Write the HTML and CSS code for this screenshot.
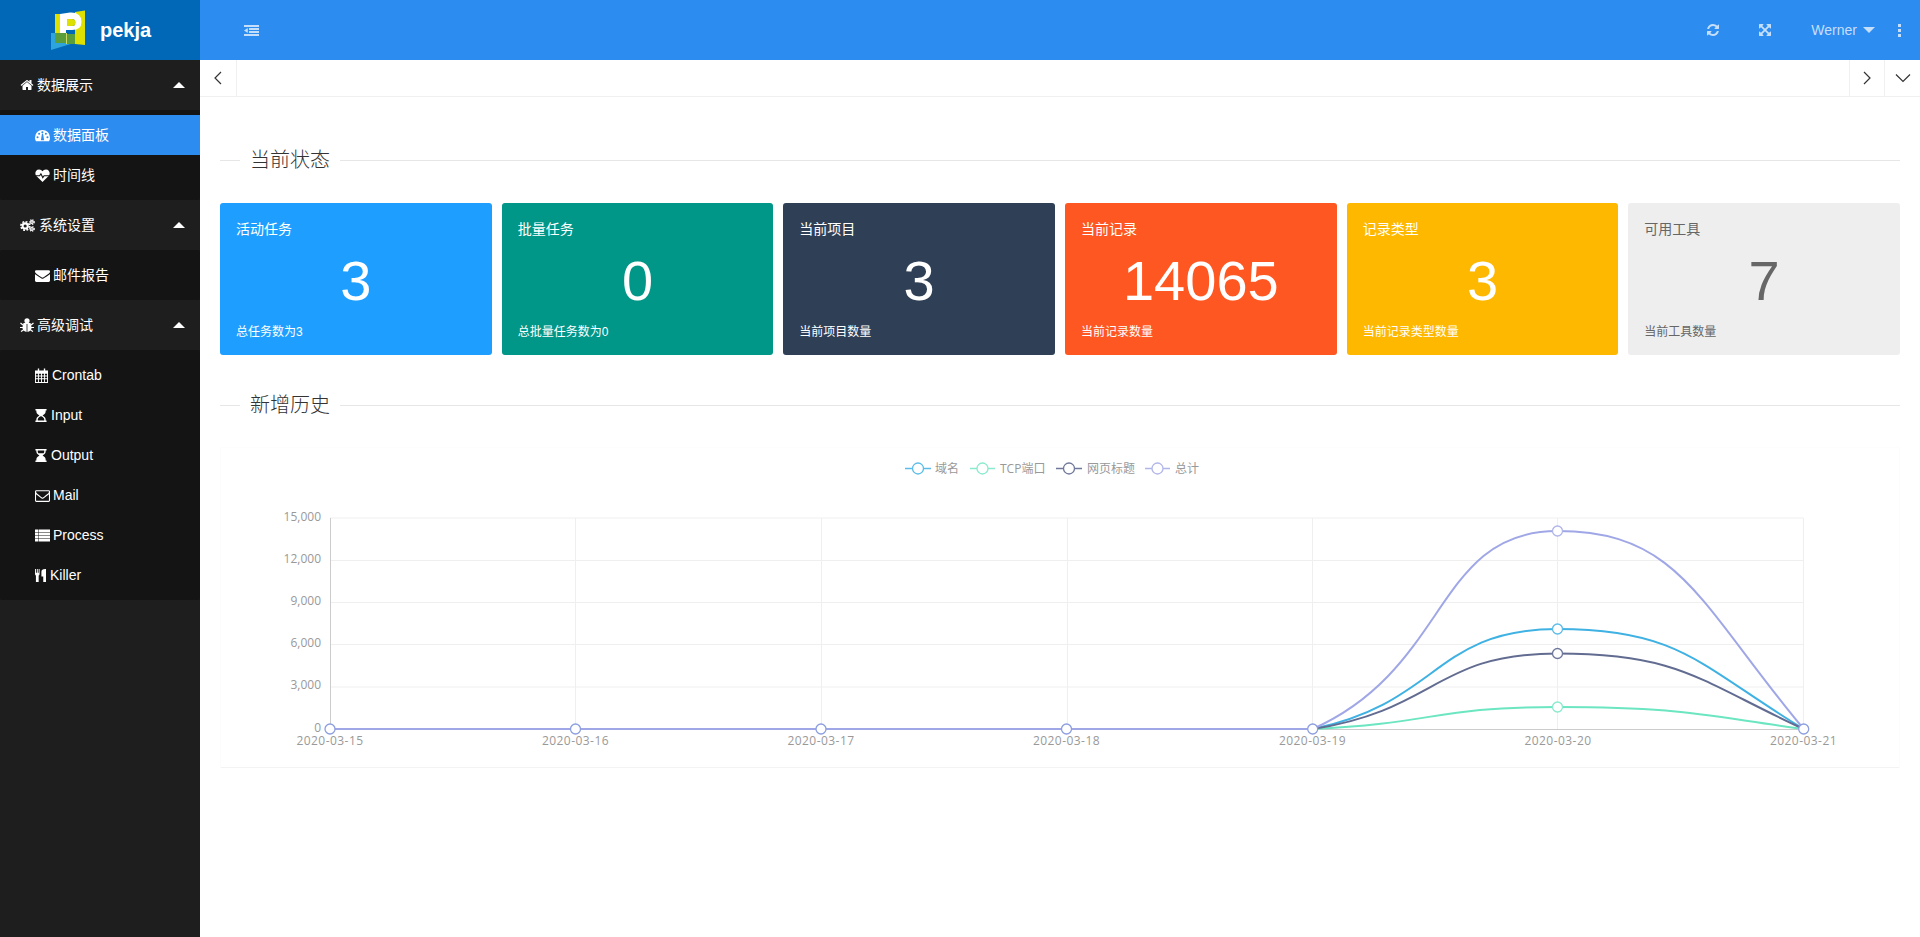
FILE: index.html
```html
<!DOCTYPE html>
<html lang="zh-CN">
<head>
<meta charset="utf-8">
<title>pekja</title>
<link rel="stylesheet" href="styles.css">
</head>
<body>
<aside class="sidebar">
  <div class="logo">
    <svg class="logo-mark" viewBox="0 0 36 40" aria-hidden="true">
      <path class="lg-yellow" d="M5 4h6v19H5z"/>
      <path class="lg-yellow" d="M25 2L35 0.500V35L25 34z"/>
      <path class="lg-blue" d="M1 23L5 23V33H24L1 40z"/>
      <path class="lg-green" d="M5 23H16V33H5z"/>
      <path class="lg-green" d="M17 24H25V34H17z"/>
      <path class="lg-pale" d="M16 23h1v11h-1z"/>
      <path class="lg-white" fill-rule="evenodd" d="M10 4L20 2.500Q31.500 2 31.500 12Q31.500 20 22 20H16V23H10zM17 9V16H22Q25.500 16 25.500 12.500Q25.500 9 22 9z"/>
      <path class="lg-yellow" d="M17 9H22Q25.500 9 25.500 12.500Q25.500 16 22 16H17z"/>
    </svg>
    <span class="logo-text">pekja</span>
  </div>
  <nav class="nav">
    <div class="nav-head">
      <span class="nav-label">
        <svg class="ic ic-home" viewBox="0 0 1792 1792"><path d="M1472 992v480q0 26-19 45t-45 19h-384v-384h-256v384h-384q-26 0-45-19t-19-45v-480q0-1 .5-3t.5-3l575-474 575 474q1 2 1 6zm223-69l-62 74q-8 9-21 11h-3q-13 0-21-7l-692-577-692 577q-12 8-24 7-13-2-21-11l-62-74q-8-10-7-23.500t11-21.500l719-599q32-26 76-26t76 26l244 204v-195q0-14 9-23t23-9h192q14 0 23 9t9 23v408l219 182q10 8 11 21.500t-7 23.500z"/></svg>
        数据展示
      </span>
      <i class="caret-up"></i>
    </div>
    <ul class="nav-sub">
      <li class="nav-item is-active">
        <svg class="ic ic-wide" viewBox="0 0 16 16"><path fill-rule="evenodd" d="M8 2A8 8 0 0 0 0 10q0 2 1 4h14q1-2 1-4a8 8 0 0 0-8-8zM2.700 11a1.100 1.100 0 1 1 0-2.200 1.100 1.100 0 0 1 0 2.200zm1.700-3.700a1.100 1.100 0 1 1 0-2.200 1.100 1.100 0 0 1 0 2.200zM7.900 5.700a1.100 1.100 0 1 1 0-2.200 1.100 1.100 0 0 1 0 2.200zm3.700 1.600a1.100 1.100 0 1 1 0-2.200 1.100 1.100 0 0 1 0 2.200zM13.300 11a1.100 1.100 0 1 1 0-2.200 1.100 1.100 0 0 1 0 2.200zM9.700 13h-3.400l1.100-7h1.200z"/></svg>
        数据面板
      </li>
      <li class="nav-item">
        <svg class="ic ic-wide" viewBox="0 0 16 16"><path d="M8 15L1.500 8.500C-.8 6 .5 1.500 4.300 1.500 6 1.500 7.300 2.500 8 3.500c.7-1 2-2 3.700-2 3.800 0 5.100 4.500 2.800 7z"/><path class="ic-cut" d="M.5 8.200h4.500l1.300-2 2 4 1.400-2h6"/></svg>
        时间线
      </li>
    </ul>
    <div class="nav-head">
      <span class="nav-label">
        <svg class="ic ic-cogs" viewBox="0 0 16 14"><circle class="gear-teeth" cx="5.500" cy="7.500" r="4.600"/><circle class="gear-body" cx="5.500" cy="7.500" r="2.800"/><circle class="gear-teeth gear-sm" cx="12.800" cy="3.300" r="2.500"/><circle class="gear-body gear-body-sm" cx="12.800" cy="3.300" r="1.400"/><circle class="gear-teeth gear-sm" cx="12.800" cy="10.700" r="2.500"/><circle class="gear-body gear-body-sm" cx="12.800" cy="10.700" r="1.400"/></svg>
        系统设置
      </span>
      <i class="caret-up"></i>
    </div>
    <ul class="nav-sub">
      <li class="nav-item">
        <svg class="ic ic-wide" viewBox="0 0 1792 1792"><path d="M1792 710v794q0 66-47 113t-113 47h-1472q-66 0-113-47t-47-113v-794q44 49 101 87 362 246 497 345 57 42 92.500 65.500t94.500 48 110 24.500h2q51 0 110-24.500t94.500-48 92.500-65.500q170-123 498-345 57-39 100-87zm0-294q0 79-49 151t-122 123q-376 261-468 325-10 7-42.500 30.500t-54 38-52 32.500-57.500 27-50 9h-2q-23 0-50-9t-57.500-27-52-32.500-54-38-42.500-30.500q-91-64-262-182.500t-205-142.500q-62-42-117-115.500t-55-136.500q0-78 41.500-130t118.500-52h1472q65 0 112.500 47t47.500 113z"/></svg>
        邮件报告
      </li>
    </ul>
    <div class="nav-head">
      <span class="nav-label">
        <svg class="ic ic-home ic-bug" viewBox="0 0 14 14"><circle cx="7" cy="2.800" r="2.600"/><path d="M3.500 5h7q1 3 1 5 0 3-4.500 4-4.500-1-4.500-4 0-2 1-5z"/><path class="bug-legs" d="M3 7L.5 5M3 9.500H0M3.500 12L1 13.500M11 7l2.500-2M11 9.500h3M10.500 12l2.500 1.500"/><path class="ic-cut thin" d="M7 6v8"/></svg>
        高级调试
      </span>
      <i class="caret-up"></i>
    </div>
    <ul class="nav-sub">
      <li class="nav-item">
        <svg class="ic ic-cal" viewBox="0 0 14 16"><path fill-rule="evenodd" d="M0 2.500h3V.5h1.500v2h5V.5H11v2h3V16H0zM1 6v2h2.200V6zm3.200 0v2h2.300V6zm3.300 0v2h2.300V6zm3.300 0v2H13V6zM1 9v2h2.200V9zm3.200 0v2h2.300V9zm3.300 0v2h2.300V9zm3.300 0v2H13V9zM1 12v3h2.200v-3zm3.200 0v3h2.300v-3zm3.300 0v3h2.300v-3zm3.300 0v3H13v-3z"/></svg>
        Crontab
      </li>
      <li class="nav-item">
        <svg class="ic ic-glass" viewBox="0 0 12 14"><path fill-rule="evenodd" d="M0 0h12v1.500h-1V3c0 2-2 3.200-3.300 4C9 7.800 11 9 11 11v1.500h1V14H0v-1.500h1V11c0-2 2-3.200 3.300-4C3 6.200 1 5 1 3V1.500H0zM6 7.700C5 8 2.500 9.200 2.500 11v1.500h7V11C9.500 9.200 7 8 6 7.700z"/></svg>
        Input
      </li>
      <li class="nav-item">
        <svg class="ic ic-glass" viewBox="0 0 12 14"><path fill-rule="evenodd" d="M0 0h12v1.500h-1V3c0 2-2 3.200-3.300 4C9 7.800 11 9 11 11v1.500h1V14H0v-1.500h1V11c0-2 2-3.200 3.300-4C3 6.200 1 5 1 3V1.500H0zM2.500 1.500V3c0 .6.300 1.200.7 1.700h5.600c.4-.5.700-1.100.7-1.700V1.500z"/></svg>
        Output
      </li>
      <li class="nav-item">
        <svg class="ic ic-wide" viewBox="0 0 1792 1792"><path d="M1664 1504v-768q-32 36-69 66-268 206-426 338-51 43-83 67t-86.500 48.500-102.500 24.500h-2q-48 0-102.500-24.500t-86.500-48.500-83-67q-158-132-426-338-37-30-69-66v768q0 13 9.500 22.500t22.500 9.500h1472q13 0 22.500-9.500t9.500-22.500zm0-1051v-24.500l-.5-13-3-12.500-5.500-9-9-7.500-14-2.500h-1472q-13 0-22.500 9.500t-9.500 22.500q0 168 147 284 193 152 401 317 6 5 35 29.500t46 37.500 44.500 31.500 50.500 27.500 43 9h2q20 0 43-9t50.500-27.500 44.500-31.500 46-37.500 35-29.500q208-165 401-317 54-43 100.500-115.500t46.500-131.500zm128-37v1088q0 66-47 113t-113 47h-1472q-66 0-113-47t-47-113v-1088q0-66 47-113t113-47h1472q66 0 113 47t47 113z"/></svg>
        Mail
      </li>
      <li class="nav-item">
        <svg class="ic ic-wide" viewBox="0 0 15 12"><path d="M0 0h3v2.500H0zM3.500 0H15v2.500H3.500zM0 3h3v2.700H0zM3.500 3H15v2.700H3.500zM0 6.300h3V9H0zM3.500 6.300H15V9H3.500zM0 9.500h3V12H0zM3.500 9.500H15V12H3.500z"/></svg>
        Process
      </li>
      <li class="nav-item">
        <svg class="ic ic-cut-ic" viewBox="0 0 12 14"><path d="M0 0h1v4h1V0h1v4h1V0h1v5q0 1.500-1 2v7H1V7Q0 6.500 0 5z"/><path d="M7 3q0-3 4-3h1v14H9V8H7z"/></svg>
        Killer
      </li>
    </ul>
  </nav>
</aside>

<div class="shell">
  <header class="topbar">
    <svg class="tb-menu" viewBox="0 0 15 11"><path d="M0 0h15v2H0zM5 3h10v2H5zM5 6h10v2H5zM0 9h15v2H0zM0 5.500L3.800 3v5z"/></svg>
    <div class="tb-right">
      <svg class="tb-ic" viewBox="0 0 1792 1792"><path d="M1639 1056q0 5-1 7-64 268-268 434.500t-478 166.500q-146 0-282.500-55t-243.500-157l-129 129q-19 19-45 19t-45-19-19-45v-448q0-26 19-45t45-19h448q26 0 45 19t19 45-19 45l-137 137q71 66 161 102t187 36q134 0 250-65t186-179q11-17 53-117 8-23 30-23h192q13 0 22.500 9.500t9.500 22.500zm25-800v448q0 26-19 45t-45 19h-448q-26 0-45-19t-19-45 19-45l138-138q-148-137-349-137-134 0-250 65t-186 179q-11 17-53 117-8 23-30 23h-199q-13 0-22.500-9.500t-9.500-22.500v-7q65-268 270-434.500t480-166.500q146 0 284 55.500t245 156.500l130-129q19-19 45-19t45 19 19 45z"/></svg>
      <svg class="tb-ic" viewBox="0 0 1792 1792"><path d="M1411 541l-355 355 355 355 144-144q29-31 70-14 39 17 39 59v448q0 26-19 45t-45 19h-448q-42 0-59-40-17-39 14-69l144-144-355-355-355 355 144 144q31 30 14 69-17 40-59 40h-448q-26 0-45-19t-19-45v-448q0-42 40-59 39-17 69 14l144 144 355-355-355-355-144 144q-19 19-45 19-12 0-24-5-40-17-40-59v-448q0-26 19-45t45-19h448q42 0 59 40 17 39-14 69l-144 144 355 355 355-355-144-144q-31-30-14-69 17-40 59-40h448q26 0 45 19t19 45v448q0 42-39 59-13 5-25 5-26 0-45-19z"/></svg>
      <span class="tb-user">Werner<i class="caret-down"></i></span>
      <span class="tb-dots"><i></i><i></i><i></i></span>
    </div>
  </header>

  <div class="tabbar">
    <button class="tab-btn tab-btn-left"><svg class="chev" viewBox="0 0 10 14"><path d="M8 1L2 7l6 6"/></svg></button>
    <div class="tab-fill"></div>
    <button class="tab-btn tab-btn-next"><svg class="chev" viewBox="0 0 10 14"><path d="M2 1l6 6-6 6"/></svg></button>
    <button class="tab-btn tab-btn-down"><svg class="chev chev-wide" viewBox="0 0 16 10"><path d="M1 1.500l7 7 7-7"/></svg></button>
  </div>

  <main class="content">
    <div class="field-title field-first"><span>当前状态</span></div>
    <section class="cards">
      <article class="card c-blue"><h3>活动任务</h3><div class="num">3</div><p>总任务数为3</p></article>
      <article class="card c-green"><h3>批量任务</h3><div class="num">0</div><p>总批量任务数为0</p></article>
      <article class="card c-navy"><h3>当前项目</h3><div class="num">3</div><p>当前项目数量</p></article>
      <article class="card c-orange"><h3>当前记录</h3><div class="num">14065</div><p>当前记录数量</p></article>
      <article class="card c-amber"><h3>记录类型</h3><div class="num">3</div><p>当前记录类型数量</p></article>
      <article class="card c-gray"><h3>可用工具</h3><div class="num">7</div><p>当前工具数量</p></article>
    </section>
    <div class="field-title field-second"><span>新增历史</span></div>
    <section class="chart-box">
      <svg class="chart" viewBox="220 447 1680 321" width="1680" height="321">
        <g class="grid">
          <path d="M330 518H1803.500M330 560.500H1803.500M330 602.500H1803.500M330 644.500H1803.500M330 687H1803.500"/>
          <path d="M575.500 518V729M821.500 518V729M1067.500 518V729M1312.500 518V729M1557.500 518V729M1803.500 518V729"/>
        </g>
        <path class="axis" d="M330.500 518V729.500H1803.500"/>
        <g class="ylab">
          <text x="321" y="521">15,000</text>
          <text x="321" y="563">12,000</text>
          <text x="321" y="605">9,000</text>
          <text x="321" y="647">6,000</text>
          <text x="321" y="689">3,000</text>
          <text x="321" y="732">0</text>
        </g>
        <g class="xlab">
          <text x="330" y="745">2020-03-15</text>
          <text x="575.500" y="745">2020-03-16</text>
          <text x="821" y="745">2020-03-17</text>
          <text x="1066.500" y="745">2020-03-18</text>
          <text x="1312.500" y="745">2020-03-19</text>
          <text x="1558" y="745">2020-03-20</text>
          <text x="1803.500" y="745">2020-03-21</text>
        </g>
        <g class="lines">
          <path class="s1" d="M1312.700 729C1439.900 702.800 1434.800 629 1557.500 629C1680.200 629 1700 666 1803.700 729"/>
          <path class="s2" d="M1312.700 729C1435.400 723.400 1434.800 707 1557.500 707C1680.200 707 1700 715 1803.700 729"/>
          <path class="s3" d="M1312.700 729C1438 709.500 1434.800 653.500 1557.500 653.500C1680.200 653.500 1700 681.400 1803.700 729"/>
          <path class="s4" d="M330 729H1312.700C1450 668 1434.800 531 1557.500 531C1680.200 531 1700 605 1803.700 729"/>
        </g>
        <g class="dots">
          <circle class="s1" cx="1557.500" cy="629" r="5"/>
          <circle class="s2" cx="1557.500" cy="707" r="5"/>
          <circle class="s3" cx="1557.500" cy="653.500" r="5"/>
          <circle class="s4" cx="1557.500" cy="531" r="5"/>
          <circle class="s0" cx="330" cy="729" r="5"/>
          <circle class="s0" cx="575.500" cy="729" r="5"/>
          <circle class="s0" cx="821" cy="729" r="5"/>
          <circle class="s0" cx="1066.500" cy="729" r="5"/>
          <circle class="s0" cx="1312.700" cy="729" r="5"/>
          <circle class="s0" cx="1803.700" cy="729" r="5"/>
        </g>
        <g class="legend">
          <path class="s1 l" d="M905 468.500H931"/><circle class="s1" cx="918" cy="468.500" r="5.500"/><text x="935" y="472.500">域名</text>
          <path class="s2 l" d="M970 468.500H995"/><circle class="s2" cx="982.500" cy="468.500" r="5.500"/><text x="1000" y="472.500">TCP端口</text>
          <path class="s3 l" d="M1056 468.500H1082"/><circle class="s3" cx="1069" cy="468.500" r="5.500"/><text x="1087" y="472.500">网页标题</text>
          <path class="s4 l" d="M1145 468.500H1170"/><circle class="s4" cx="1157.500" cy="468.500" r="5.500"/><text x="1175" y="472.500">总计</text>
        </g>
      </svg>
    </section>
  </main>
</div>
</body>
</html>
```

FILE: styles.css
```css
* { box-sizing: border-box; }
html, body { height: 100%; }
body {
  margin: 0;
  display: flex;
  height: 937px;
  overflow: hidden;
  background: #fff;
  color: #333;
  font: 14px/20px "Liberation Sans", "Noto Sans CJK SC", sans-serif;
}

/* sidebar */
.sidebar { width: 200px; flex: none; background: #1e1e1e; color: #fff; }
.logo {
  height: 60px;
  background: #0068b7;
  display: flex;
  align-items: center;
  padding-left: 50px;
}
.logo-mark { width: 36px; height: 40px; margin-right: 14px; flex: none; }
.lg-yellow { fill: #dde000; }
.lg-blue { fill: #2ea4dc; }
.lg-green { fill: #5a9e3c; }
.lg-pale { fill: #c9dc6a; }
.lg-white { fill: #fff; }
.logo-text { font-size: 20px; font-weight: 700; color: #fff; }

.nav { display: block; }
.nav-head {
  height: 50px;
  display: flex;
  align-items: center;
  justify-content: space-between;
  padding: 0 15px 0 20px;
}
.nav-label { display: flex; align-items: center; gap: 3px; }
.caret-up {
  width: 0; height: 0;
  border-left: 6px solid transparent;
  border-right: 6px solid transparent;
  border-bottom: 6px solid #fff;
}
.nav-sub {
  list-style: none;
  margin: 0;
  padding: 5px 0;
  background: #141414;
  border-radius: 2px;
}
.nav-item {
  height: 40px;
  display: flex;
  align-items: center;
  gap: 4px;
  padding-left: 35px;
  color: #fff;
}
.nav-item.is-active { background: #2d8cf0; }

.ic { width: 14px; height: 14px; fill: #fff; flex: none; }
.ic-home { width: 14px; height: 14px; }
.ic-wide { width: 15px; height: 15px; margin-right: -1px; }
.ic-cogs { width: 15px; height: 13px; margin-right: 1px; }
.ic-cal { width: 13px; height: 15px; }
.ic-glass { width: 12px; height: 13px; }
.ic-cut-ic { width: 11px; height: 13px; }
.ic-cut { fill: none; stroke: #141414; stroke-width: 1.200; }
.ic-cut.thin { stroke-width: .8; }
.bug-legs { fill: none; stroke: #fff; stroke-width: 1.200; }
.gear-teeth { fill: none; stroke: #fff; stroke-width: 1.800; stroke-dasharray: 2 1.600; }
.gear-sm { stroke-width: 1.200; stroke-dasharray: 1.200 1; }
.gear-body { fill: none; stroke: #fff; stroke-width: 2.200; }
.gear-body-sm { stroke-width: 1.400; }

/* shell */
.shell { flex: 1; min-width: 0; display: flex; flex-direction: column; }
.topbar {
  height: 60px;
  flex: none;
  background: #2d8cf0;
  display: flex;
  align-items: center;
  justify-content: space-between;
  padding: 0 19px 0 44px;
}
.tb-menu { width: 15px; height: 11px; fill: #c5dffb; }
.tb-right { display: flex; align-items: center; color: #c5dffb; }
.tb-ic { width: 14px; height: 14px; fill: #c5dffb; margin-right: 38px; }
.tb-user { display: flex; align-items: center; font-size: 14px; margin-right: 23px; margin-left: 1px; }
.caret-down {
  width: 0; height: 0;
  margin-left: 6px;
  border-left: 6px solid transparent;
  border-right: 6px solid transparent;
  border-top: 6px solid #c5dffb;
}
.tb-dots { display: flex; flex-direction: column; gap: 2px; }
.tb-dots i { width: 3px; height: 3px; background: #c5dffb; display: block; }

.tabbar {
  height: 37px;
  flex: none;
  display: flex;
  border-bottom: 1px solid #f0f0f0;
}
.tab-fill { flex: 1; }
.tab-btn {
  padding: 0;
  border: 0;
  background: #fff;
  display: flex;
  align-items: center;
  justify-content: center;
}
.tab-btn-left { width: 37px; border-right: 1px solid #f0f0f0; padding-bottom: 1px; }
.tab-btn-next { width: 35px; border-left: 1px solid #f0f0f0; }
.tab-btn-down { width: 36px; border-left: 1px solid #f0f0f0; }
.chev { width: 10px; height: 14px; fill: none; stroke: #333; stroke-width: 1.200; }
.chev-wide { width: 16px; height: 10px; }

/* content */
.content { flex: 1; padding: 0 20px; }
.field-title {
  display: flex;
  align-items: center;
  font-size: 20px;
  line-height: 28px;
  font-weight: 300;
  color: #333;
}
.field-title::before { content: ""; width: 20px; border-top: 1px solid #e6e6e6; }
.field-title::after { content: ""; flex: 1; border-top: 1px solid #e6e6e6; }
.field-title span { padding: 0 10px; }
.field-first { margin-top: 49px; }
.field-second { margin-top: 36px; }

.cards { display: grid; grid-template-columns: repeat(6, 1fr); gap: 10px; margin-top: 29px; }
.card {
  height: 152px;
  border-radius: 3px;
  padding: 16px 16px 13px;
  color: #fff;
  display: flex;
  flex-direction: column;
}
.card h3 { margin: 0; font-size: 14px; line-height: 20px; font-weight: 400; }
.card p { margin: 0; font-size: 12px; line-height: 20px; }
.num { flex: 1; font-size: 56px; line-height: 83px; text-align: center; }
.c-blue { background: #1e9fff; }
.c-green { background: #009688; }
.c-navy { background: #2f4056; }
.c-orange { background: #ff5722; }
.c-amber { background: #ffb800; }
.c-gray { background: #eee; color: #666; }

.chart-box {
  margin-top: 28px;
  box-shadow: inset 1px 0 0 #fcfcfc, inset -1px 0 0 #fcfcfc, inset 0 1px 0 #fdfdfd, inset 0 -1px 0 #f3f3f3;
}
.chart { display: block; }
.grid path { fill: none; stroke: #efefef; stroke-width: 1; }
.axis { fill: none; stroke: #ccc; stroke-width: 1; }
.ylab text, .xlab text, .legend text {
  font: 12px "Open Sans", "Noto Sans CJK SC", sans-serif;
  fill: #999;
}
.ylab text { text-anchor: end; }
.xlab text { text-anchor: middle; letter-spacing: .45px; }
.lines path { fill: none; stroke-width: 2; }
.lines .s1 { stroke: #3fb1e3; }
.lines .s2 { stroke: #6be6c1; }
.lines .s3 { stroke: #626c91; }
.lines .s4 { stroke: #a0a7e6; }
.dots circle, .legend circle { fill: #fff; stroke-width: 1.300; }
circle.s0 { stroke: #8c9ee0; }
circle.s1, .l.s1 { stroke: #5cbce8; }
circle.s2, .l.s2 { stroke: #8aeacd; }
circle.s3, .l.s3 { stroke: #6f789b; }
circle.s4, .l.s4 { stroke: #b0b5ea; }
.l { fill: none; stroke-width: 1.500; }
```
